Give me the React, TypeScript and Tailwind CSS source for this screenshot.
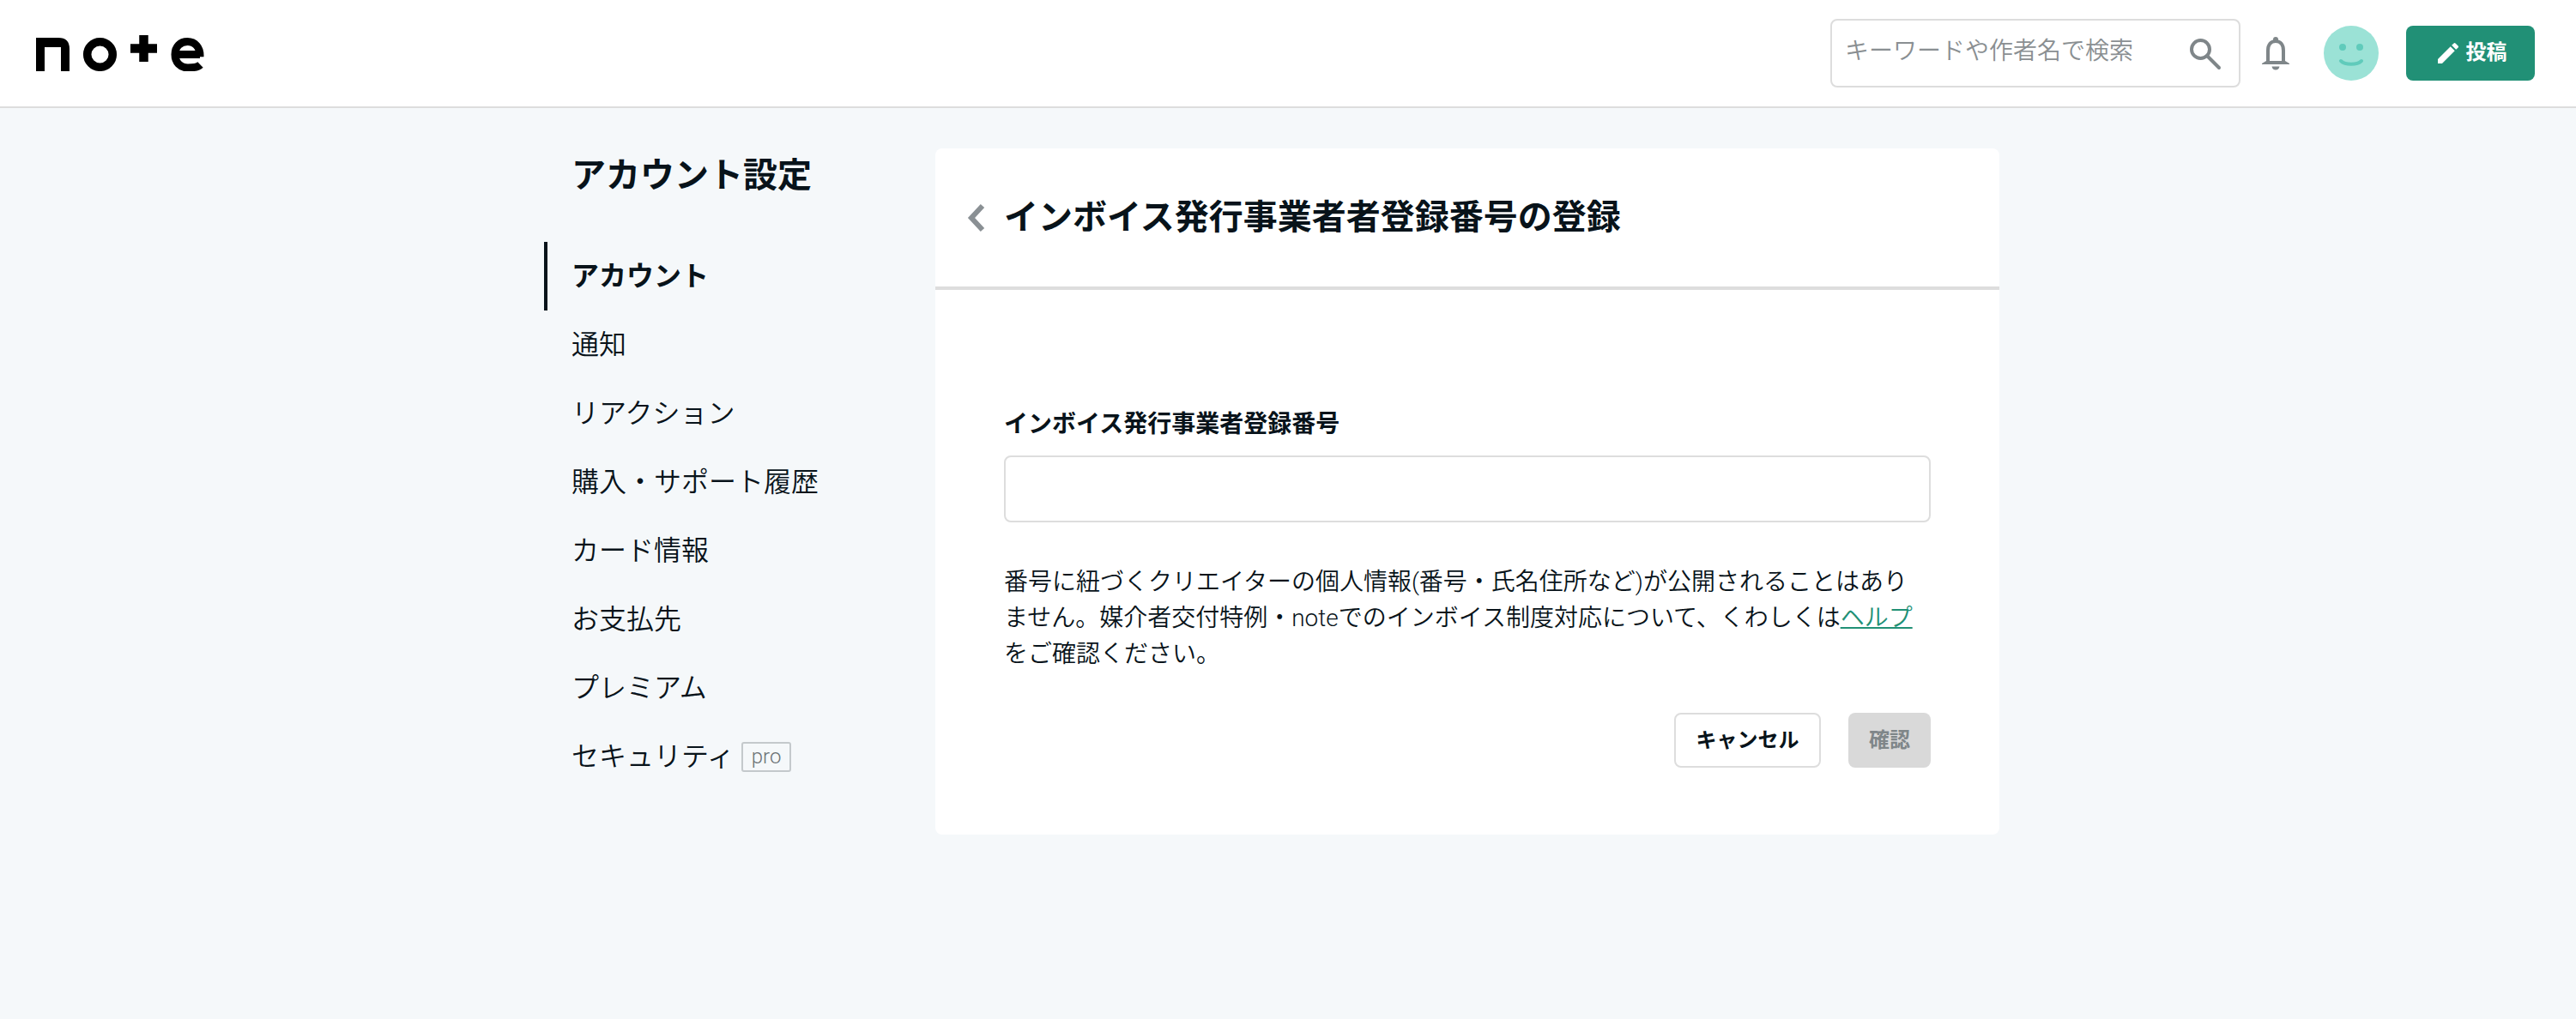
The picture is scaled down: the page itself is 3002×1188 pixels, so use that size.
const navItems = ["通知", "リアクション", "購入・サポート履歴", "カード情報", "お支払先", "プレミアム"];

function NoteLogo() {
  return (
    <svg width="196" height="42" viewBox="0 0 196 42" fill="none">
      <path d="M0 42V3H26Q39 3 39 16V42H29V14H10V42Z" fill="#000" />
      <circle cx="74.500" cy="22.500" r="14.800" stroke="#000" strokeWidth="9.500" />
      <path d="M110 15.500h31M125.500 0v31" stroke="#000" strokeWidth="10.500" />
      <path d="M161 22.500h30M191.500 34.500c-3 3-9 3.500-14.500 3.500-9 0-15-6.500-15-15.500S168 7.500 176.500 7.500 191.500 14 191 25" stroke="#000" strokeWidth="9" />
    </svg>
  );
}

function SearchIcon() {
  return (
    <svg width="38" height="38" viewBox="0 0 38 38" fill="none">
      <circle cx="13.500" cy="13.500" r="10.500" stroke="#7f8689" strokeWidth="4" />
      <path d="M21 21 35 35" stroke="#7f8689" strokeWidth="4" strokeLinecap="round" />
    </svg>
  );
}

function Bell() {
  return (
    <svg width="32" height="40" viewBox="0 0 32 40" fill="none">
      <circle cx="16" cy="4" r="3" fill="#7f8689" />
      <path d="M7 31V17C7 10 10.500 6 16 6s9 4 9 11v14" stroke="#7f8689" strokeWidth="4" />
      <path d="M0 33v-1l5-3h22l5 3v1Z" fill="#7f8689" />
      <path d="M11.500 35.500h9c-.5 2.500-2 4-4.500 4s-4-1.500-4.500-4Z" fill="#7f8689" />
    </svg>
  );
}

function Smile() {
  return (
    <svg width="64" height="64" viewBox="0 0 64 64">
      <circle cx="32" cy="32" r="32" fill="#9be2d6" />
      <circle cx="22" cy="25" r="4" fill="#60cbbb" />
      <circle cx="42" cy="25" r="4" fill="#60cbbb" />
      <path d="M20 41c5 5 19 5 24 0" stroke="#60cbbb" strokeWidth="4" fill="none" strokeLinecap="round" />
    </svg>
  );
}

function Pencil() {
  return (
    <svg width="32" height="32" viewBox="0 0 24 24" fill="#fff">
      <path d="M3 17.250V21h3.750L17.810 9.940l-3.750-3.750L3 17.250zM20.710 7.040a1 1 0 0 0 0-1.410l-2.340-2.340a1 1 0 0 0-1.410 0l-1.830 1.830 3.750 3.750 1.830-1.830z" />
    </svg>
  );
}

export default function App() {
  return (
    <div className="min-h-[1188px] bg-[#f5f8fa] font-['Roboto','Noto_Sans_CJK_JP',sans-serif] font-[350] text-[#08131a]">
      <header className="flex h-[126px] items-center border-b-2 border-[#dddddd] bg-white pl-[42px] pr-[48px]">
        <NoteLogo />
        <div className="ml-auto flex items-center">
          <div className="flex h-[80px] w-[478px] items-center rounded-lg border-2 border-[#dddddd] pl-[15px] pr-[20px]">
            <span className="mb-[4px] text-[28px] text-[#8a8f92]">キーワードや作者名で検索</span>
            <div className="mt-[2px] ml-auto"><SearchIcon /></div>
          </div>
          <div className="ml-[25px]"><Bell /></div>
          <div className="ml-[40px]"><Smile /></div>
          <button className="ml-[32px] flex h-[64px] w-[150px] items-center justify-center gap-[5px] rounded-lg bg-[#219076] text-[24px] font-bold text-white">
            <Pencil />
            <span className="mb-[2px]">投稿</span>
          </button>
        </div>
      </header>

      <div className="ml-[634px] flex w-[1696px] pt-[47px]">
        <aside className="w-[456px] shrink-0">
          <h1 className="mt-[2px] pl-[32px] text-[40px] leading-[60px] font-bold">アカウント設定</h1>
          <nav className="mt-[47px]">
            <div className="flex h-[80px] items-center border-l-4 border-[#08131a] pl-[28px] text-[32px] font-bold">アカウント</div>
            {navItems.map((item) => (
              <div key={item} className="flex h-[80px] items-center pl-[32px] text-[32px]">{item}</div>
            ))}
            <div className="flex h-[80px] items-center pl-[32px] text-[32px]">
              <span>セキュリティ</span>
              <span className="ml-[8px] flex h-[35px] w-[58px] items-center justify-center rounded-[3px] border-2 border-[#c4c9cc] text-[24px] text-[#6b7275]">pro</span>
            </div>
          </nav>
        </aside>

        <main className="h-[800px] w-[1240px] rounded-lg bg-white">
          <div className="flex h-[165px] items-center border-b-4 border-[#dddddd] pl-[36px]">
            <svg width="24" height="34" viewBox="0 0 24 34" fill="none">
              <path d="M19 3 6 17l13 14" stroke="#8a9094" strokeWidth="6" />
            </svg>
            <h2 className="ml-[20px] text-[40px] leading-[60px] font-bold">インボイス発行事業者者登録番号の登録</h2>
          </div>
          <div className="px-[80px] pt-[136px]">
            <label className="block text-[28px] leading-[42px] font-bold">インボイス発行事業者登録番号</label>
            <input className="mt-[15px] block h-[78px] w-full rounded-lg border-2 border-[#dddddd] bg-white" />
            <p className="mt-[49px] text-[28px] leading-[42px]">
              番号に紐づくクリエイターの個人情報(番号・氏名住所など)が公開されることはありません。媒介者交付特例・noteでのインボイス制度対応について、くわしくは
              <a className="text-[#219076] underline decoration-2">ヘルプ</a>
              をご確認ください。
            </p>
            <div className="mt-[47px] flex justify-end gap-[32px]">
              <button className="h-[64px] w-[171px] rounded-lg border-2 border-[#dddddd] bg-white text-[24px] font-bold">キャンセル</button>
              <button className="h-[64px] w-[96px] rounded-lg bg-[#d9d9d9] text-[24px] font-bold text-[#7f8689]">確認</button>
            </div>
          </div>
        </main>
      </div>
    </div>
  );
}
